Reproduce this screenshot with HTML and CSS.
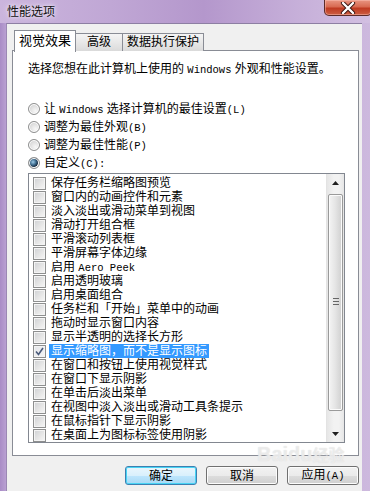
FILE: index.html
```html
<!DOCTYPE html>
<html lang="zh-CN">
  <head>
    <meta charset="UTF-8" />
    <meta name="viewport" content="width=device-width, initial-scale=1.0" />
    <title>性能选项</title>
    <link rel="stylesheet" href="styles.css">
  </head>
  <body>
    <div class="window">
      <div class="titlebar">
        <span class="title">性能选项</span>
        <div class="close">
          <svg width="16" height="12" viewBox="0 0 16 12">
            <path d="M3 1 L13 11 M13 1 L3 11" stroke="#3a1410" stroke-width="4.2" stroke-linecap="round" fill="none" />
            <path d="M3 1 L13 11 M13 1 L3 11" stroke="#ffffff" stroke-width="2.4" stroke-linecap="round" fill="none" />
          </svg>
        </div>
      </div>

      <div class="client">
        <div class="tabs">
          <div class="tab active">视觉效果</div>
          <div class="tab t2">高级</div>
          <div class="tab t3">数据执行保护</div>
        </div>

        <div class="panel">
          <p class="intro">选择您想在此计算机上使用的 <span class="en">Windows</span> 外观和性能设置。</p>

          <div class="radios">
            <div class="radio-row"><span class="radio"></span><span class="rtext">让 <span class="en">Windows</span> 选择计算机的最佳设置<span class="en">(L)</span></span></div>
            <div class="radio-row"><span class="radio"></span><span class="rtext">调整为最佳外观<span class="en">(B)</span></span></div>
            <div class="radio-row"><span class="radio"></span><span class="rtext">调整为最佳性能<span class="en">(P)</span></span></div>
            <div class="radio-row"><span class="radio on"></span><span class="rtext">自定义<span class="en">(C):</span></span></div>
          </div>

          <div class="listbox">
            <ul class="items">
              <li><span class="cb"></span><span class="label">保存任务栏缩略图预览</span></li>
              <li><span class="cb"></span><span class="label">窗口内的动画控件和元素</span></li>
              <li><span class="cb"></span><span class="label">淡入淡出或滑动菜单到视图</span></li>
              <li><span class="cb"></span><span class="label">滑动打开组合框</span></li>
              <li><span class="cb"></span><span class="label">平滑滚动列表框</span></li>
              <li><span class="cb"></span><span class="label">平滑屏幕字体边缘</span></li>
              <li><span class="cb"></span><span class="label">启用 <span class="en">Aero Peek</span></span></li>
              <li><span class="cb"></span><span class="label">启用透明玻璃</span></li>
              <li><span class="cb"></span><span class="label">启用桌面组合</span></li>
              <li><span class="cb"></span><span class="label">任务栏和「开始」菜单中的动画</span></li>
              <li><span class="cb"></span><span class="label">拖动时显示窗口内容</span></li>
              <li><span class="cb"></span><span class="label">显示半透明的选择长方形</span></li>
              <li class="selected">
                <span class="cb checked">
                  <svg width="9" height="9" viewBox="0 0 9 9">
                    <path d="M1 4.5 L3.5 7.5 L8 1" stroke="#4a5a7a" stroke-width="1.6" fill="none" />
                  </svg>
                </span><span class="label">显示缩略图，而不是显示图标</span>
              </li>
              <li><span class="cb"></span><span class="label">在窗口和按钮上使用视觉样式</span></li>
              <li><span class="cb"></span><span class="label">在窗口下显示阴影</span></li>
              <li><span class="cb"></span><span class="label">在单击后淡出菜单</span></li>
              <li><span class="cb"></span><span class="label">在视图中淡入淡出或滑动工具条提示</span></li>
              <li><span class="cb"></span><span class="label">在鼠标指针下显示阴影</span></li>
              <li><span class="cb"></span><span class="label">在桌面上为图标标签使用阴影</span></li>
            </ul>
            <div class="scrollbar">
              <div class="arrow up">
                <svg width="7" height="4" viewBox="0 0 7 4"><path d="M0 4 L3.5 0 L7 4 Z" fill="#202020" /></svg>
              </div>
              <div class="track">
                <div class="thumb">
                  <span class="grip"></span>
                </div>
              </div>
              <div class="arrow down">
                <svg width="7" height="4" viewBox="0 0 7 4"><path d="M0 0 L3.5 4 L7 0 Z" fill="#202020" /></svg>
              </div>
            </div>
          </div>
        </div>

        <div class="buttons">
          <button class="btn default">确定</button>
          <button class="btn">取消</button>
          <button class="btn">应用<span class="en">(A)</span></button>
        </div>

        <div class="watermark">Baidu<span class="wm-cn">经验</span></div>
      </div>
    </div>
  </body>
</html>
```

FILE: styles.css
```css
body {
  margin: 0;
  padding: 0;
  font-family: "Liberation Sans", "Noto Sans CJK SC", sans-serif;
  font-size: 12px;
  color: #000;
  background: #b79ed0;
}

.window {
  width: 370px;
  height: 491px;
  overflow: hidden;
  display: flex;
  flex-direction: column;
  background: linear-gradient(90deg, #a98cc6 0, #b9a0d2 6px, #c7b2da 40%, #bfa6d4 70%, #cdb9de 100%);
}

.titlebar {
  height: 23px;
  display: flex;
  justify-content: space-between;
  align-items: flex-start;
  background: linear-gradient(90deg, #cbb5dd 0, #c0a7d5 30%, #b497cc 55%, #c6afd9 80%, #d2bfe1 100%);
}

.title {
  margin: 4px 0 0 7px;
  line-height: 16px;
  color: #111;
  text-shadow: 0 0 6px #f4eefa, 0 0 3px #f4eefa;
}

.close {
  width: 48px;
  height: 16px;
  margin-right: -2px;
  box-sizing: border-box;
  border: 1px solid #5b2a28;
  border-top: none;
  border-radius: 0 0 5px 5px;
  background: linear-gradient(180deg, #e99582 0, #d86a52 45%, #bf3a22 55%, #cc5e42 100%);
  box-shadow: inset 0 0 0 1px rgba(255, 200, 190, 0.45);
  display: flex;
  align-items: center;
  justify-content: center;
}

.client {
  position: relative;
  flex: 1;
  margin-left: 6px;
  width: 356px;
  box-sizing: border-box;
  padding: 6px 3px 0 5px;
  background: #f0f0f0;
  border-top: 1px solid #8d7fa3;
  border-left: 1px solid #9b88b4;
}

.tabs {
  display: flex;
  align-items: flex-end;
  height: 21px;
  padding-left: 2px;
}

.tab {
  box-sizing: border-box;
  height: 18px;
  line-height: 16px;
  border: 1px solid #898c95;
  border-bottom: none;
  background: linear-gradient(180deg, #f4f4f4 0, #e8e8e8 50%, #dadada 100%);
  text-align: center;
}

.tab.active {
  position: relative;
  z-index: 1;
  width: 62px;
  height: 22px;
  line-height: 20px;
  margin-bottom: -1px;
  background: #fff;
  font-size: 13px;
}

.t2 {
  width: 47px;
  border-left: none;
}

.t3 {
  width: 81px;
  border-left: none;
}

.panel {
  box-sizing: border-box;
  height: 406px;
  margin-top: -1px;
  border: 1px solid #898c95;
  background: #fff;
  padding: 11px 13px 0 15px;
}

.intro {
  margin: 0;
  line-height: 14px;
}

.en {
  font-family: "Liberation Mono", monospace;
  font-size: 10.5px;
}

.radios {
  margin-top: 23px;
}

.radio-row {
  display: flex;
  align-items: center;
  height: 18px;
}

.rtext {
  line-height: 18px;
}

.radio {
  box-sizing: border-box;
  width: 12px;
  height: 12px;
  margin-right: 4px;
  border: 1px solid #8e8f8f;
  border-radius: 50%;
  background: radial-gradient(circle at 65% 70%, #f8f8f8 0, #dcdcdc 60%, #cbcbcb 100%);
  box-shadow: inset 0 0 0 1px #fff;
}

.radio.on {
  background: radial-gradient(circle at 40% 40%, #9ecbe8 0, #3d6a8c 35%, #14263a 60%, #dcdcdc 62%, #e8e8e8 100%);
}

.listbox {
  display: flex;
  box-sizing: border-box;
  height: 270px;
  margin-top: 1px;
  border: 1px solid #828790;
  background: #fff;
}

.items {
  flex: 1;
  list-style: none;
  margin: 0;
  padding: 2px 0 0 4px;
}

.items li {
  display: flex;
  align-items: center;
  height: 14px;
  white-space: nowrap;
}

.cb {
  box-sizing: border-box;
  width: 13px;
  height: 13px;
  margin-right: 3px;
  border: 1px solid #8e8f8f;
  background: linear-gradient(135deg, #cfd1d4 0, #e6e6e6 55%, #f7f7f7 100%);
  box-shadow: inset 0 0 0 1px #f4f4f4;
  display: flex;
  align-items: center;
  justify-content: center;
}

.cb.checked {
  background: linear-gradient(135deg, #e4e6ea 0, #f4f4f4 100%);
}

.label {
  line-height: 14px;
  padding: 0 2px;
}

.selected .label {
  background: #3399ff;
  color: #fff;
}

.scrollbar {
  width: 17px;
  display: flex;
  flex-direction: column;
  background: linear-gradient(90deg, #e6e6e6 0, #f2f2f2 40%, #f2f2f2 70%, #e6e6e6 100%);
  border-left: 1px solid #e3e3e3;
}

.arrow {
  height: 17px;
  display: flex;
  align-items: center;
  justify-content: center;
}

.track {
  flex: 1;
  padding: 3px 0 14px;
}

.thumb {
  box-sizing: border-box;
  height: 100%;
  margin: 0 1px;
  border: 1px solid #9a9a9a;
  border-radius: 2px;
  background: linear-gradient(90deg, #f4f4f4 0, #e4e4e4 50%, #cfcfcf 100%);
  box-shadow: inset 0 0 0 1px #fbfbfb;
  display: flex;
  align-items: center;
  justify-content: center;
}

.grip {
  width: 6px;
  height: 5px;
  border-top: 1px solid #666;
  border-bottom: 1px solid #666;
  background: linear-gradient(180deg, transparent 2px, #666 2px, #666 3px, transparent 3px);
  margin-top: -2px;
}

.buttons {
  display: flex;
  justify-content: flex-end;
  gap: 9px;
  margin-top: 10px;
}

.btn {
  box-sizing: border-box;
  width: 72px;
  height: 19px;
  padding: 0;
  font-family: inherit;
  font-size: 12px;
  line-height: 16px;
  color: #000;
  border: 1px solid #707070;
  border-radius: 3px;
  background: linear-gradient(180deg, #f2f2f2 0, #ebebeb 50%, #dddddd 51%, #cfcfcf 100%);
  box-shadow: inset 0 0 0 1px #fcfcfc;
}

.btn.default {
  border-color: #3c7fb1;
  background: linear-gradient(180deg, #eaf6fd 0, #d9f0fc 50%, #bee6fd 51%, #a7d9f5 100%);
  box-shadow: inset 0 0 0 1px #48d4f4;
}

.watermark {
  position: absolute;
  left: 250px;
  top: 418px;
  font-family: "Liberation Sans", sans-serif;
  font-size: 20px;
  font-weight: bold;
  color: rgba(255, 255, 255, 0.5);
  text-shadow: 0 0 1px #d4d4d4;
}

.wm-cn {
  font-family: "Noto Sans CJK SC", sans-serif;
  font-size: 16px;
}
```
